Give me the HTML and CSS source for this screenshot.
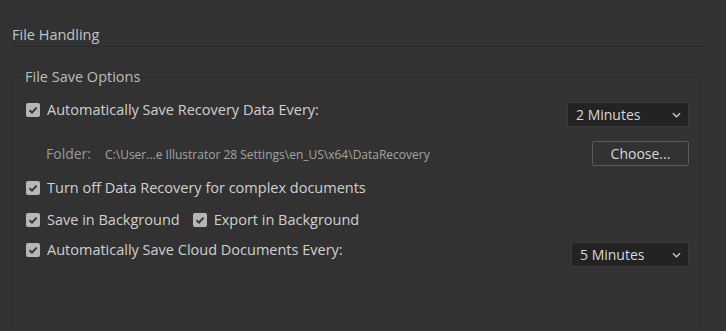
FILE: index.html
```html
<!DOCTYPE html>
<html lang="en">

<head>
    <meta charset="UTF-8">
    <title>File Handling</title>
    <link rel="stylesheet" href="styles.css">
</head>

<body>
    <div class="panel">
        <div class="section-title">File Handling</div>

        <fieldset class="group">
            <legend>File Save Options</legend>

            <div class="row row-first">
                <label class="check">
                    <span class="box"><svg viewBox="0 0 14 14"><path d="M3.5 7.2 L6 9.6 L10.6 4.6"/></svg></span>
                    <span>Automatically Save Recovery Data Every:</span>
                </label>
                <div class="select select-wide">
                    <span>2 Minutes</span>
                    <svg class="chevron" viewBox="0 0 10 6"><path d="M1 1 L5 5 L9 1"/></svg>
                </div>
            </div>

            <div class="row row-folder">
                <div class="folder">
                    <span class="folder-label">Folder:</span>
                    <span class="folder-path">C:\User...e Illustrator 28 Settings\en_US\x64\DataRecovery</span>
                </div>
                <button class="button" type="button">Choose...</button>
            </div>

            <div class="row row-check">
                <label class="check">
                    <span class="box"><svg viewBox="0 0 14 14"><path d="M3.5 7.2 L6 9.6 L10.6 4.6"/></svg></span>
                    <span>Turn off Data Recovery for complex documents</span>
                </label>
            </div>

            <div class="row row-check">
                <div class="pair">
                    <label class="check">
                        <span class="box"><svg viewBox="0 0 14 14"><path d="M3.5 7.2 L6 9.6 L10.6 4.6"/></svg></span>
                        <span>Save in Background</span>
                    </label>
                    <label class="check">
                        <span class="box"><svg viewBox="0 0 14 14"><path d="M3.5 7.2 L6 9.6 L10.6 4.6"/></svg></span>
                        <span>Export in Background</span>
                    </label>
                </div>
            </div>

            <div class="row row-cloud">
                <label class="check">
                    <span class="box"><svg viewBox="0 0 14 14"><path d="M3.5 7.2 L6 9.6 L10.6 4.6"/></svg></span>
                    <span>Automatically Save Cloud Documents Every:</span>
                </label>
                <div class="select select-narrow">
                    <span>5 Minutes</span>
                    <svg class="chevron" viewBox="0 0 10 6"><path d="M1 1 L5 5 L9 1"/></svg>
                </div>
            </div>
        </fieldset>
    </div>
</body>

</html>
```

FILE: styles.css
```css
html,
body {
    margin: 0;
    height: 100%;
    background: #323232;
    overflow: hidden;
}

.panel {
    height: 331px;
    overflow: hidden;
    font-family: "Open Sans", "Noto Sans", sans-serif;
    font-size: 14.5px;
    color: #d0d0d0;
}

.section-title {
    margin: 0 23px 0 12px;
    padding-top: 25px;
    height: 21px;
    line-height: 20px;
    color: #c4c4c4;
    border-bottom: 1px solid #2a2a2a;
}

.group {
    margin: 20px 25px 0 12px;
    padding: 0 11px 0 13px;
    border: 1px solid #2b2b2b;
    border-radius: 3px;
    height: 280px;
}

.group legend {
    padding: 0 1px;
    margin-left: -2px;
    color: #bdbdbd;
    line-height: 20px;
}

.row {
    display: flex;
    align-items: flex-start;
    justify-content: space-between;
}

.row-first {
    margin-top: 15px;
    height: 25px;
}

.row-folder {
    margin-top: 14px;
    height: 25px;
    align-items: center;
}

.row-check {
    height: 32px;
    align-items: center;
}

.row-first + .row-folder + .row-check {
    margin-top: 6px;
}

.row-cloud {
    padding-top: 6px;
    height: 26px;
}

.check {
    display: flex;
    align-items: center;
    gap: 7px;
    height: 16px;
    line-height: 16px;
    white-space: nowrap;
}

.box {
    width: 14px;
    height: 14px;
    border-radius: 2px;
    background: #b6b6b6;
    display: flex;
}

.box svg {
    width: 14px;
    height: 14px;
}

.box path {
    fill: none;
    stroke: #353535;
    stroke-width: 2;
}

.pair {
    display: flex;
    gap: 13px;
}

.select {
    box-sizing: border-box;
    height: 25px;
    display: flex;
    align-items: center;
    justify-content: space-between;
    padding: 0 7px 0 8px;
    background: #232323;
    border: 1px solid #3a3a3a;
    border-radius: 2px;
    color: #d8d8d8;
    font-size: 14px;
}

.select-wide {
    width: 122px;
}

.select-narrow {
    width: 118px;
}

.chevron {
    width: 9px;
    height: 6px;
}

.chevron path {
    fill: none;
    stroke: #cfcfcf;
    stroke-width: 1.4;
}

.folder {
    display: flex;
    align-items: baseline;
    gap: 14px;
    padding-left: 20px;
}

.folder-label {
    color: #9a9a9a;
    font-size: 14px;
}

.folder-path {
    color: #a4a4a4;
    font-size: 12px;
}

.button {
    box-sizing: border-box;
    width: 97px;
    height: 25px;
    background: #323232;
    border: 1px solid #5a5a5a;
    border-radius: 2px;
    color: #d8d8d8;
    font-family: "Open Sans", "Noto Sans", sans-serif;
    font-size: 14px;
    padding: 0;
}
```
